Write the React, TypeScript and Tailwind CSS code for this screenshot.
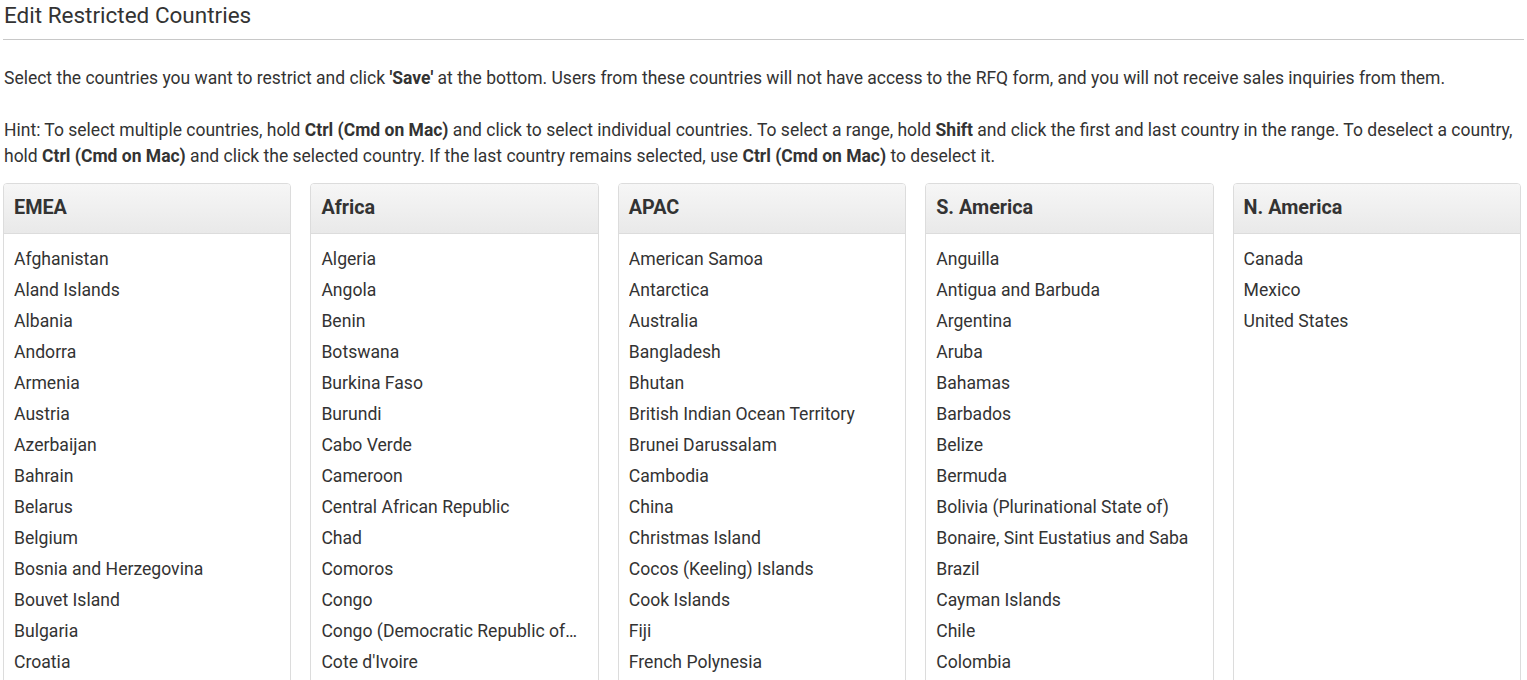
const REGIONS: { name: string; countries: string[] }[] = [
  {
    name: "EMEA",
    countries: [
      "Afghanistan",
      "Aland Islands",
      "Albania",
      "Andorra",
      "Armenia",
      "Austria",
      "Azerbaijan",
      "Bahrain",
      "Belarus",
      "Belgium",
      "Bosnia and Herzegovina",
      "Bouvet Island",
      "Bulgaria",
      "Croatia",
      "Cyprus",
      "Czechia",
    ],
  },
  {
    name: "Africa",
    countries: [
      "Algeria",
      "Angola",
      "Benin",
      "Botswana",
      "Burkina Faso",
      "Burundi",
      "Cabo Verde",
      "Cameroon",
      "Central African Republic",
      "Chad",
      "Comoros",
      "Congo",
      "Congo (Democratic Republic of the)",
      "Cote d'Ivoire",
      "Djibouti",
      "Egypt",
    ],
  },
  {
    name: "APAC",
    countries: [
      "American Samoa",
      "Antarctica",
      "Australia",
      "Bangladesh",
      "Bhutan",
      "British Indian Ocean Territory",
      "Brunei Darussalam",
      "Cambodia",
      "China",
      "Christmas Island",
      "Cocos (Keeling) Islands",
      "Cook Islands",
      "Fiji",
      "French Polynesia",
      "Guam",
      "Heard Island and McDonald Islands",
    ],
  },
  {
    name: "S. America",
    countries: [
      "Anguilla",
      "Antigua and Barbuda",
      "Argentina",
      "Aruba",
      "Bahamas",
      "Barbados",
      "Belize",
      "Bermuda",
      "Bolivia (Plurinational State of)",
      "Bonaire, Sint Eustatius and Saba",
      "Brazil",
      "Cayman Islands",
      "Chile",
      "Colombia",
      "Costa Rica",
      "Cuba",
    ],
  },
  {
    name: "N. America",
    countries: ["Canada", "Mexico", "United States"],
  },
];

export default function App() {
  return (
    <div className="min-h-screen bg-white px-[3px] text-[#333] font-['Roboto','Liberation_Sans',sans-serif]">
      {/* Title */}
      <h1 className="pt-[1px] pl-px text-[22.5px] leading-[28px] text-[#333]">Edit Restricted Countries</h1>
      <hr className="mt-[10px] border-t border-[#c8c8c8]" />

      {/* Intro */}
      <div className="pl-px text-[17.5px] leading-[26px]">
        <p className="mt-[25px]">
          Select the countries you want to restrict and click <b>'Save'</b> at the bottom. Users from these countries
          will not have access to the RFQ form, and you will not receive sales inquiries from them.
        </p>
        <p className="mt-[26px]">
          Hint: To select multiple countries, hold <b>Ctrl (Cmd on Mac)</b> and click to select individual countries. To
          select a range, hold <b>Shift</b> and click the first and last country in the range. To deselect a country,
          hold <b>Ctrl (Cmd on Mac)</b> and click the selected country. If the last country remains selected, use{" "}
          <b>Ctrl (Cmd on Mac)</b> to deselect it.
        </p>
      </div>

      {/* Region panels */}
      <div className="mt-[14px] grid grid-cols-5 gap-[19px] pr-[3px]">
        {REGIONS.map((r) => (
          <div key={r.name} className="h-[520px] overflow-hidden rounded-[4px] border border-[#dcdcdc] bg-white">
            <div className="flex h-[50px] items-center border-b border-[#dcdcdc] bg-gradient-to-b from-[#f6f6f6] to-[#e9e9e9] px-[10px] pb-px">
              <span className="text-[19.8px] font-bold text-[#333]">{r.name}</span>
            </div>
            <ul className="pt-[10px] pl-[10px] pr-[20px]">
              {r.countries.map((c) => (
                <li key={c} className="truncate text-[17.6px] leading-[31px]">
                  {c}
                </li>
              ))}
            </ul>
          </div>
        ))}
      </div>
    </div>
  );
}
